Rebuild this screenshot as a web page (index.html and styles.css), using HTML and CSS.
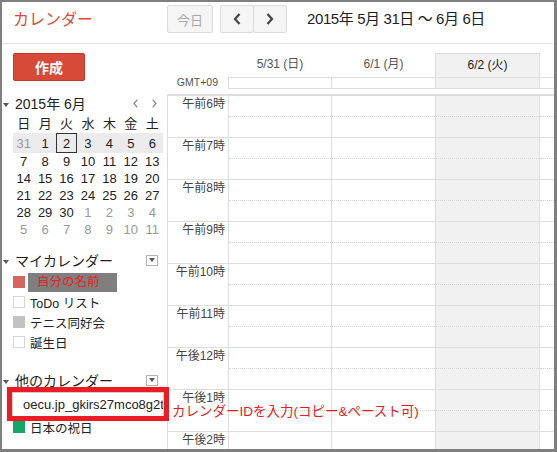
FILE: index.html
```html
<!DOCTYPE html>
<html lang="ja">
<head>
<meta charset="utf-8">
<title>カレンダー</title>
<link rel="stylesheet" href="styles.css">
</head>
<body>
<div class="app">
  <header class="topbar">
    <div class="logo">カレンダー</div>
    <button class="btn today-btn">今日</button>
    <div class="navgroup">
      <button class="btn nav"><svg width="8" height="12" viewBox="0 0 8 12"><path d="M6.5 1 L2 6 L6.5 11" fill="none" stroke="#444" stroke-width="2.2"/></svg></button>
      <button class="btn nav"><svg width="8" height="12" viewBox="0 0 8 12"><path d="M1.5 1 L6 6 L1.5 11" fill="none" stroke="#444" stroke-width="2.2"/></svg></button>
    </div>
    <div class="range">2015年 5月 31日 〜 6月 6日</div>
  </header>
  <div class="main">
    <aside class="sidebar">
      <button class="create">作成</button>
      <section class="minical">
        <div class="sec-head">
          <span class="tri"></span>
          <span class="mc-title">2015年 6月</span>
          <span class="mc-nav">
            <svg width="5" height="9" viewBox="0 0 5 9"><path d="M4.3 0.7 L1 4.5 L4.3 8.3" fill="none" stroke="#888" stroke-width="1.2"/></svg>
            <svg width="5" height="9" viewBox="0 0 5 9"><path d="M0.7 0.7 L4 4.5 L0.7 8.3" fill="none" stroke="#888" stroke-width="1.2"/></svg>
          </span>
        </div>
        <table class="mc-grid">
          <tr class="dow"><th>日</th><th>月</th><th>火</th><th>水</th><th>木</th><th>金</th><th>土</th></tr>
          <tr class="cur-week"><td class="off">31</td><td>1</td><td class="sel">2</td><td>3</td><td>4</td><td>5</td><td>6</td></tr>
          <tr><td>7</td><td>8</td><td>9</td><td>10</td><td>11</td><td>12</td><td>13</td></tr>
          <tr><td>14</td><td>15</td><td>16</td><td>17</td><td>18</td><td>19</td><td>20</td></tr>
          <tr><td>21</td><td>22</td><td>23</td><td>24</td><td>25</td><td>26</td><td>27</td></tr>
          <tr><td>28</td><td>29</td><td>30</td><td class="off">1</td><td class="off">2</td><td class="off">3</td><td class="off">4</td></tr>
          <tr><td class="off">5</td><td class="off">6</td><td class="off">7</td><td class="off">8</td><td class="off">9</td><td class="off">10</td><td class="off">11</td></tr>
        </table>
      </section>
      <section class="cal-list">
        <div class="sec-head list-head">
          <span class="tri"></span>
          <span class="list-title">マイカレンダー</span>
          <span class="dd"><span class="dd-tri"></span></span>
        </div>
        <ul class="cals">
          <li><span class="sw sw-me"></span><span class="me-label">自分の名前</span></li>
          <li><span class="sw sw-empty"></span><span class="cal-name">ToDo リスト</span></li>
          <li><span class="sw sw-gray"></span><span class="cal-name">テニス同好会</span></li>
          <li><span class="sw sw-empty"></span><span class="cal-name">誕生日</span></li>
        </ul>
      </section>
      <section class="cal-list other">
        <div class="sec-head list-head">
          <span class="tri"></span>
          <span class="list-title">他のカレンダー</span>
          <span class="dd"><span class="dd-tri"></span></span>
        </div>
        <div class="id-row"><div class="id-input">oecu.jp_gkirs27mco8g2t</div></div>
        <ul class="cals">
          <li><span class="sw sw-green"></span><span class="cal-name">日本の祝日</span></li>
        </ul>
      </section>
    </aside>
    <div class="week">
      <div class="week-head">
        <div class="wgrid dh-row">
          <div class="lab"></div>
          <div class="dh">5/31 (日)</div>
          <div class="dh">6/1 (月)</div>
          <div class="dh cur">6/2 (火)</div>
          <div class="dh edge"></div>
        </div>
        <div class="wgrid ad-row">
          <div class="lab tz">GMT+09</div>
          <div class="ad"></div>
          <div class="ad"></div>
          <div class="ad cur"></div>
          <div class="ad"></div>
        </div>
      </div>
      <div class="week-body">
        <div class="wgrid hr"><div class="lab">午前6時</div><div class="cell"><div class="half"></div></div><div class="cell"><div class="half"></div></div><div class="cell cur"><div class="half"></div></div><div class="cell"><div class="half"></div></div></div>
        <div class="wgrid hr"><div class="lab">午前7時</div><div class="cell"><div class="half"></div></div><div class="cell"><div class="half"></div></div><div class="cell cur"><div class="half"></div></div><div class="cell"><div class="half"></div></div></div>
        <div class="wgrid hr"><div class="lab">午前8時</div><div class="cell"><div class="half"></div></div><div class="cell"><div class="half"></div></div><div class="cell cur"><div class="half"></div></div><div class="cell"><div class="half"></div></div></div>
        <div class="wgrid hr"><div class="lab">午前9時</div><div class="cell"><div class="half"></div></div><div class="cell"><div class="half"></div></div><div class="cell cur"><div class="half"></div></div><div class="cell"><div class="half"></div></div></div>
        <div class="wgrid hr"><div class="lab">午前10時</div><div class="cell"><div class="half"></div></div><div class="cell"><div class="half"></div></div><div class="cell cur"><div class="half"></div></div><div class="cell"><div class="half"></div></div></div>
        <div class="wgrid hr"><div class="lab">午前11時</div><div class="cell"><div class="half"></div></div><div class="cell"><div class="half"></div></div><div class="cell cur"><div class="half"></div></div><div class="cell"><div class="half"></div></div></div>
        <div class="wgrid hr"><div class="lab">午後12時</div><div class="cell"><div class="half"></div></div><div class="cell"><div class="half"></div></div><div class="cell cur"><div class="half"></div></div><div class="cell"><div class="half"></div></div></div>
        <div class="wgrid hr"><div class="lab">午後1時</div><div class="cell"><div class="half"></div></div><div class="cell"><div class="half"></div></div><div class="cell cur"><div class="half"></div></div><div class="cell"><div class="half"></div></div></div>
        <div class="wgrid hr"><div class="lab">午後2時</div><div class="cell"><div class="half"></div></div><div class="cell"><div class="half"></div></div><div class="cell cur"><div class="half"></div></div><div class="cell"><div class="half"></div></div></div>
      </div>
    </div>
  </div>
  <div class="note">カレンダーIDを入力(コピー&amp;ペースト可)</div>
</div>
</body>
</html>
```
FILE: styles.css
```css
* { box-sizing: border-box; }

body {
  margin: 0;
  background: #7f7f7f;
  font-family: "Liberation Sans", "Noto Sans CJK JP", sans-serif;
  color: #222;
}

.app {
  position: relative;
  margin: 2px 0 0 2px;
  width: 552px;
  height: 447px;
  background: #fff;
  overflow: hidden;
}

/* top bar */
.topbar {
  display: flex;
  align-items: flex-start;
  height: 42px;
  padding: 3px 0 0;
  border-bottom: 1px solid #e5e5e5;
}

.logo {
  width: 165px;
  height: 28px;
  padding-left: 11px;
  font-size: 16px;
  line-height: 30px;
  color: #dd4b39;
}

.btn {
  font-family: inherit;
  height: 28px;
  border: 1px solid #dcdcdc;
  border-radius: 2px;
  background: #f5f5f5;
  padding: 0;
  display: flex;
  align-items: center;
  justify-content: center;
}
.today-btn {
  width: 46px;
  font-size: 13px;
  color: #aaa;
}
.navgroup {
  display: flex;
  margin-left: 7px;
}
.nav { width: 34px; }
.nav + .nav { margin-left: -1px; }

.range {
  margin-left: 20px;
  font-size: 15px;
  line-height: 28px;
  letter-spacing: -0.4px;
  color: #222;
}

/* main */
.main {
  display: flex;
  height: 405px;
  overflow: hidden;
}

.sidebar {
  width: 165px;
  flex: none;
}

.create {
  display: block;
  margin: 9px 0 0 11px;
  width: 72px;
  height: 28px;
  border: 1px solid #c53727;
  border-radius: 2px;
  background: #d84a38;
  color: #fff;
  font-family: inherit;
  font-weight: bold;
  font-size: 14px;
  padding: 0;
}

.sec-head {
  display: flex;
  align-items: center;
  height: 16px;
  margin-top: 14px;
  padding-left: 1px;
}
.tri {
  width: 0;
  height: 0;
  border-left: 3px solid transparent;
  border-right: 3px solid transparent;
  border-top: 4px solid #555;
  margin: 3px 6px 0 0;
}
.mc-title {
  font-size: 14px;
  color: #222;
}
.mc-nav {
  margin-left: auto;
  display: flex;
  gap: 14px;
  margin-right: 10px;
}

.mc-grid {
  margin: 2px 0 0 11px;
  width: 150px;
  border-collapse: collapse;
  table-layout: fixed;
  font-size: 13px;
}
.mc-grid th, .mc-grid td {
  padding: 0;
  text-align: center;
  font-weight: normal;
  height: 17px;
  line-height: 17px;
}
.mc-grid .dow th { height: 20px; color: #222; }
.mc-grid .cur-week td { background: #ebebeb; height: 20px; }
.mc-grid td.off { color: #999; }
.mc-grid td.sel { box-shadow: inset 0 0 0 1px #333; }

.list-head { margin-top: 14px; }
.list-title { font-size: 14px; color: #222; }
.dd {
  margin-left: auto;
  margin-right: 9px;
  width: 12px;
  height: 11px;
  border: 1px solid #b5b5b5;
  background: #fff;
  display: flex;
  align-items: center;
  justify-content: center;
}
.dd-tri {
  width: 0;
  height: 0;
  border-left: 3px solid transparent;
  border-right: 3px solid transparent;
  border-top: 4px solid #555;
}

.cals {
  list-style: none;
  margin: 4px 0 0;
  padding: 0 0 0 11px;
}
.cals li {
  display: flex;
  align-items: center;
  height: 20px;
}
.sw {
  width: 12px;
  height: 12px;
  flex: none;
  margin-right: 5px;
}
.sw-me { background: #d5665d; margin-right: 3px; }
.sw-empty { border: 1px solid #d6d6d6; background: #fff; }
.sw-gray { background: #c2c2c2; }
.sw-green { background: #16a765; }

.me-label {
  height: 19px;
  line-height: 19px;
  background: #7f7f7f;
  color: #ec1c24;
  font-size: 12.5px;
  padding: 0 17px 0 9px;
}
.cal-name {
  font-size: 12.5px;
  color: #222;
}

.other .list-head { margin-top: 20px; }
.id-row {
  position: relative;
  margin: 4px 0 0 10px;
  width: 152px;
  height: 25px;
}
.id-input {
  height: 25px;
  border: 1px solid #ccc;
  padding-left: 10px;
  font-size: 13px;
  line-height: 23px;
  white-space: nowrap;
  overflow: hidden;
  background: #fff;
}
.id-row::after {
  content: "";
  position: absolute;
  top: -5px;
  bottom: -4px;
  left: -5px;
  right: -5px;
  border: 5px solid #ec1c24;
}
.other .cals { margin-top: 0; }

/* week grid */
.week {
  flex: 1;
  min-width: 0;
}
.wgrid {
  display: grid;
  grid-template-columns: 60px 103px 104px 104px 1fr;
}
.week-head {
  padding: 9px 0 5px 1px;
}
.dh {
  height: 24px;
  font-size: 12px;
  line-height: 23px;
  text-align: center;
  color: #555;
  border-left: 1px solid transparent;
}
.dh.cur {
  border-left-color: #ddd;
  border-top: 1px solid #ddd;
  background: #f1f1f1;
  color: #222;
  line-height: 22px;
}
.dh.edge { border-left-color: #ddd; }

.ad-row { height: 12px; }
.ad {
  border-top: 1px solid #ddd;
  border-bottom: 1px solid #ddd;
  border-left: 1px solid #ddd;
}
.ad.cur { background: #f1f1f1; }
.tz {
  font-size: 10.5px;
  color: #555;
  text-align: right;
  padding-right: 10px;
  line-height: 10px;
}

.week-body {
  border-left: 1px solid #ddd;
  border-top: 2px solid #ddd;
}
.hr {
  height: 42px;
  border-bottom: 1px solid #ddd;
}
.hr .lab {
  font-size: 12px;
  line-height: 16px;
  text-align: right;
  padding-right: 3px;
  color: #444;
}
.cell {
  border-left: 1px solid #ddd;
}
.cell.cur { background: #f1f1f1; }
.half {
  height: 21px;
  border-bottom: 1px dotted #d4d4d4;
}

/* annotation */
.note {
  position: absolute;
  left: 170px;
  top: 402px;
  font-size: 13.5px;
  line-height: 16px;
  color: #ec1c24;
  white-space: nowrap;
}
```
